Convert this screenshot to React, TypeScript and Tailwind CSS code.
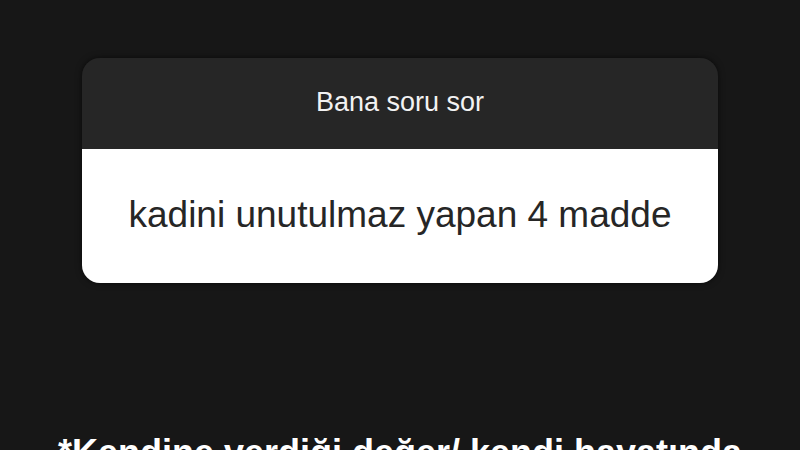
import React from "react";

export default function App() {
  return (
    <div className="w-[800px] h-[450px] bg-[#171717] overflow-hidden flex flex-col items-center" style={{ fontFamily: '"Liberation Sans", Arial, sans-serif' }}>
      <div className="shrink-0 mt-[58px] w-[636px] h-[225px] rounded-[18px] overflow-hidden flex flex-col shadow-[0_0_6px_rgba(0,0,0,0.6)]">
        <div className="h-[91px] shrink-0 bg-[#262626] flex items-center justify-center">
          <span className="text-[27px] text-[#f2f2f2] leading-none pb-[2px]">Bana soru sor</span>
        </div>
        <div className="flex-1 bg-white flex items-center justify-center">
          <span className="text-[37px] text-[#262626] leading-none pb-[4px]">kadini unutulmaz yapan 4 madde</span>
        </div>
      </div>
      <div className="shrink-0 mt-[152px] text-[36px] font-bold text-white leading-none whitespace-nowrap">
        *Kendine verdiği değer/ kendi hayatında
      </div>
    </div>
  );
}
